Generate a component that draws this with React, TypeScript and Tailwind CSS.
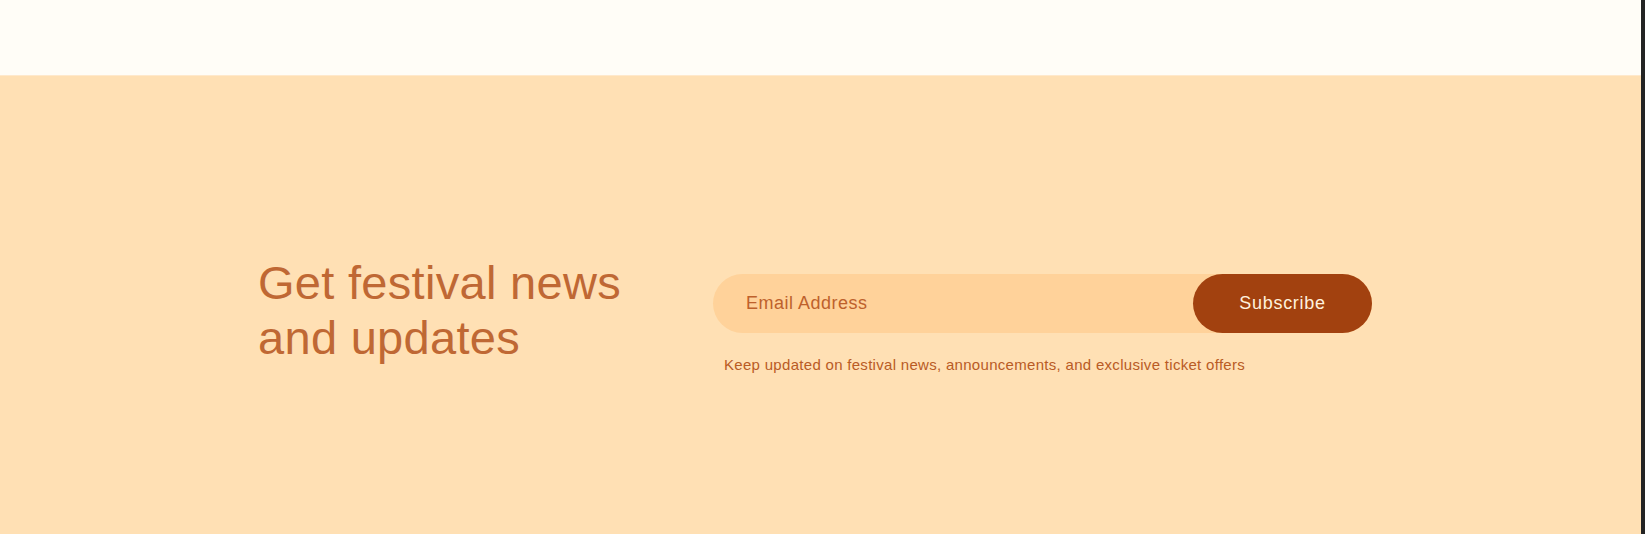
import React, { useState } from 'react';

const App: React.FC = () => {
  const [email, setEmail] = useState('');

  return (
    <div className="flex w-[1645px] h-[534px] overflow-hidden font-['Liberation_Sans',Arial,sans-serif]">
      <div className="flex flex-col flex-1">
        {/* page above the footer */}
        <div className="shrink-0 h-[76px] bg-[#FFFDF7] border-b border-[#FFE9CC]" />

        {/* Newsletter */}
        <section className="flex-1 bg-[#FFE0B4] flex items-start pl-[258px] pt-[179px]">
          <h2 className="w-[455px] text-[47px] leading-[55px] text-[#BF6834] tracking-[0.3px]">
            Get festival news
            <br />
            and updates
          </h2>

          <form className="w-[659px] pt-[19px]" onSubmit={(e) => e.preventDefault()}>
            <div className="flex h-[59px] rounded-full bg-[#FFD29A]">
              <input
                type="email"
                value={email}
                onChange={(e) => setEmail(e.target.value)}
                placeholder="Email Address"
                className="flex-1 min-w-0 bg-transparent pl-[33px] text-[18px] tracking-[0.5px] text-[#BE612C] placeholder:text-[#BE612C] outline-none"
              />
              <button
                type="submit"
                className="w-[179px] h-full rounded-full bg-[#A2410F] text-[18px] tracking-[0.7px] text-[#FFF1DE]"
              >
                Subscribe
              </button>
            </div>
            <p className="mt-[22px] pl-[11px] text-[15px] leading-[20px] tracking-[0.3px] text-[#B95B25]">
              Keep updated on festival news, announcements, and exclusive ticket offers
            </p>
          </form>
        </section>
      </div>

      {/* window edge */}
      <div className="w-[4px] bg-[#232323]" />
    </div>
  );
};

export default App;
